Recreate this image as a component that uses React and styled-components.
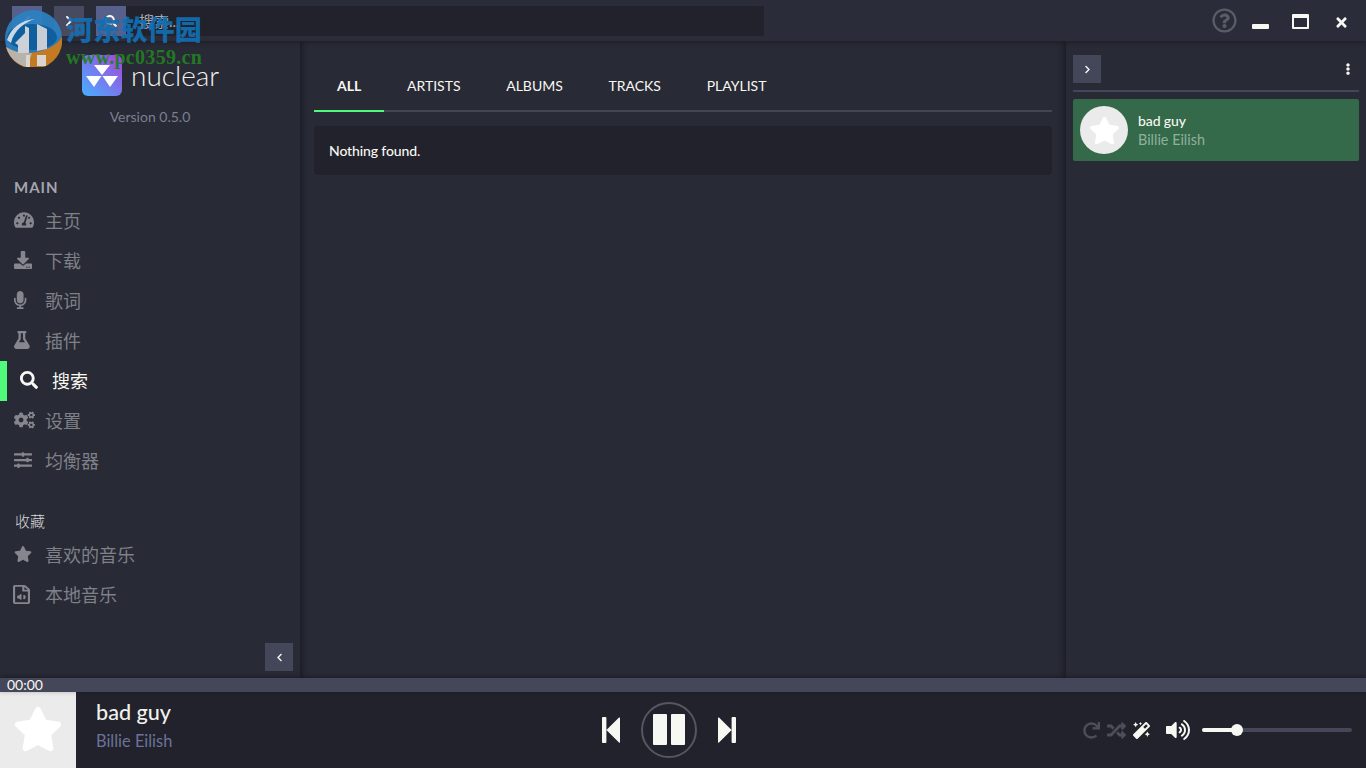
import React from "react";
import styled, { createGlobalStyle } from "styled-components";
import {
  FaTachometerAlt, FaDownload, FaMicrophone, FaFlask, FaSearch, FaCogs, FaSlidersH, FaStar,
  FaRegFileAudio, FaChevronLeft, FaChevronRight, FaRedo, FaRandom, FaMagic, FaVolumeUp,
  FaRegQuestionCircle, FaTimes, FaEllipsisV,
} from "react-icons/fa";

const Global = createGlobalStyle`
  html, body { margin: 0; padding: 0; height: 100%; overflow: hidden; background: #282a36; }
  #root { height: 100%; }
  * { box-sizing: border-box; }
`;

const Shell = styled.div`
  position: relative;
  height: 768px;
  display: flex;
  flex-direction: column;
  background: #282a36;
  color: #f8f8f2;
  font-family: Lato, "Noto Sans CJK SC", sans-serif;
  overflow: hidden;
`;

const TopBar = styled.header`
  height: 41px;
  flex: none;
  display: flex;
  align-items: center;
  padding: 0 12px;
  background: #2a2d39;
  box-shadow: 0 1px 5px rgba(0, 0, 0, 0.35);
  position: relative;
  z-index: 3;
`;

const NavButton = styled.button`
  width: 30px;
  height: 30px;
  margin-right: 12px;
  padding: 0;
  border: 0;
  display: flex;
  align-items: center;
  justify-content: center;
  font-size: 12px;
  color: #f8f8f2;
  background: ${(p) => (p.$lit ? "#56608a" : "#484a5f")};
`;

const SearchField = styled.div`
  width: 638px;
  height: 30px;
  margin-right: auto;
  margin-left: -12px;
  padding-left: 13px;
  display: flex;
  align-items: center;
  font-size: 15px;
  color: #a9abb0;
  background: #21222c;
`;

const WindowControls = styled.div`
  display: flex;
  align-items: center;
  color: #f8f8f2;
`;

const Help = styled.span`
  display: flex;
  font-size: 25px;
  color: #5a5c66;
  margin-right: 15px;
`;

const MinIcon = styled.span`
  width: 17px;
  height: 5px;
  margin-top: 11px;
  margin-right: 23px;
  border-radius: 1px;
  background: #f8f8f2;
`;

const MaxIcon = styled.span`
  width: 17px;
  height: 15px;
  margin-top: 1px;
  margin-right: 25px;
  border: 2px solid #f8f8f2;
  border-top-width: 4px;
  border-radius: 1px;
`;

const CloseIcon = styled.span`
  display: flex;
  font-size: 15px;
  margin-top: 3px;
  margin-right: 5px;
`;

const Middle = styled.div`
  flex: 1;
  min-height: 0;
  display: flex;
`;

const Sidebar = styled.aside`
  width: 300px;
  flex: none;
  display: flex;
  flex-direction: column;
  position: relative;
  z-index: 2;
  box-shadow: 2px 0 6px rgba(0, 0, 0, 0.4);
`;

const Brand = styled.div`
  height: 55px;
  padding-top: 14px;
  padding-left: 82px;
  display: flex;
  align-items: center;
  gap: 9px;
  flex: none;
`;

const BrandName = styled.span`
  font-family: Lato, sans-serif;
  font-weight: 300;
  font-size: 28px;
  line-height: 36px;
  margin-top: -1px;
  color: #f1f1ef;
`;

const Version = styled.div`
  margin-top: 12px;
  height: 18px;
  line-height: 18px;
  text-align: center;
  font-size: 14px;
  color: #7c7f92;
`;

const SectionTitle = styled.div`
  margin-top: ${(p) => p.$top}px;
  padding-left: ${(p) => (p.$cjk ? 15 : 14)}px;
  height: 20px;
  line-height: 20px;
  font-size: 15px;
  font-weight: ${(p) => (p.$cjk ? 300 : 700)};
  letter-spacing: ${(p) => (p.$cjk ? 0 : 1)}px;
  color: ${(p) => (p.$cjk ? "#d8d8da" : "#a4a5ac")};
`;

const NavList = styled.nav`
  margin-top: 4px;
  display: flex;
  flex-direction: column;
`;

const NavItem = styled.div`
  height: 40px;
  padding-bottom: 2px;
  display: flex;
  align-items: center;
  padding-left: ${(p) => (p.$active ? 13 : 14)}px;
  border-left: ${(p) => (p.$active ? "7px solid #50fa7b" : "0 solid transparent")};
  color: ${(p) => (p.$active ? "#f8f8f2" : "#7f8088")};
  font-size: 18px;
  font-weight: 400;
`;

const NavIcon = styled.span`
  width: ${(p) => (p.$active ? 32 : 31)}px;
  flex: none;
  display: flex;
  align-items: center;
  font-size: 18px;
  color: ${(p) => (p.$active ? "#f8f8f2" : "#85868e")};
  svg { width: ${(p) => p.$w ?? 18}px; }
`;

const FileIcon = styled(FaRegFileAudio)`
  && { width: 17px; height: 19px; margin-left: -1px; }
`;

const CollapseRow = styled.div`
  margin-top: auto;
  padding: 0 7px 7px 0;
  display: flex;
  justify-content: flex-end;
`;

const SquareButton = styled.button`
  width: 28px;
  height: 28px;
  padding: 0;
  border: 0;
  display: flex;
  align-items: center;
  justify-content: center;
  font-size: 9px;
  color: #f8f8f2;
  background: #44475a;
`;

const Content = styled.main`
  flex: 1;
  min-width: 0;
  padding: 15px 14px 0;
`;

const Tabs = styled.div`
  height: 56px;
  display: flex;
  border-bottom: 2px solid #44464f;
`;

const Tab = styled.div`
  height: 56px;
  padding: 4px 22.7px 0 23px;
  display: flex;
  align-items: center;
  font-size: 14px;
  font-weight: ${(p) => (p.$active ? 700 : 400)};
  color: #f8f8f2;
  border-bottom: 2px solid ${(p) => (p.$active ? "#50fa7b" : "transparent")};
`;

const Notice = styled.div`
  margin-top: 14px;
  height: 49px;
  padding-left: 15px;
  display: flex;
  align-items: center;
  font-size: 14px;
  font-weight: 500;
  letter-spacing: -0.12px;
  border-radius: 4px;
  color: #f8f8f2;
  background: #21222c;
`;

const Queue = styled.aside`
  width: 300px;
  flex: none;
  padding: 14px 7px 0;
  box-shadow: -2px 0 6px rgba(0, 0, 0, 0.4);
  position: relative;
`;

const QueueHeader = styled.div`
  height: 37px;
  padding-bottom: 7px;
  display: flex;
  align-items: center;
  justify-content: space-between;
  border-bottom: 2px solid #44475a;
`;

const QueueMenu = styled.span`
  display: flex;
  font-size: 12px;
  margin-right: 5px;
  color: #f8f8f2;
`;

const QueueItem = styled.div`
  margin-top: 7px;
  height: 62px;
  padding-left: 7px;
  display: flex;
  align-items: center;
  gap: 10px;
  border-radius: 2px;
  background: #34694a;
`;

const QueueCover = styled.div`
  width: 48px;
  height: 48px;
  border-radius: 50%;
  display: flex;
  align-items: center;
  justify-content: center;
  font-size: 31px;
  color: #fff;
  background: #ebebeb;
`;

const QueueText = styled.div`
  display: flex;
  flex-direction: column;
`;

const QueueTitle = styled.div`
  height: 19px;
  line-height: 19px;
  font-size: 14px;
  font-weight: 500;
  letter-spacing: -0.1px;
`;

const QueueArtist = styled.div`
  height: 19px;
  line-height: 19px;
  font-size: 14.4px;
  color: #8fb09c;
`;

const Seek = styled.div`
  height: 14px;
  flex: none;
  padding-left: 7px;
  line-height: 14px;
  font-size: 14px;
  color: #f8f8f2;
  background: #44475a;
  position: relative;
  z-index: 3;
  box-shadow: 0 -1px 5px rgba(0, 0, 0, 0.35);
`;

const Player = styled.footer`
  height: 76px;
  flex: none;
  display: grid;
  grid-template-columns: 1fr auto 1fr;
  align-items: center;
  background: #21222c;
`;

const Track = styled.div`
  display: flex;
  align-items: center;
  height: 76px;
`;

const Cover = styled.div`
  width: 76px;
  height: 76px;
  padding-bottom: 2px;
  display: flex;
  align-items: center;
  justify-content: center;
  font-size: 50px;
  color: #fff;
  background: #ebebeb;
`;

const TrackText = styled.div`
  margin-left: 20px;
  padding-bottom: 11px;
  display: flex;
  flex-direction: column;
`;

const TrackTitle = styled.div`
  height: 28px;
  line-height: 28px;
  font-size: 21.6px;
  font-weight: 500;
  color: #f1f1ec;
`;

const TrackArtist = styled.div`
  margin-top: 5px;
  height: 20px;
  line-height: 20px;
  font-size: 16.4px;
  color: #6c7399;
`;

const Transport = styled.div`
  display: flex;
  align-items: center;
  justify-content: center;
  gap: 21px;
  margin-left: -28px;
  margin-top: -1px;
`;

const PlayButton = styled.div`
  width: 56px;
  height: 56px;
  border-radius: 50%;
  border: 2px solid #55565e;
  display: flex;
  align-items: center;
  justify-content: center;
  gap: 4px;
`;

const PauseBar = styled.span`
  width: 14px;
  height: 31px;
  border-radius: 1px;
  background: #f8f8f2;
`;

const Controls = styled.div`
  display: flex;
  align-items: center;
  justify-content: flex-end;
  padding-right: 14px;
`;

const ModeIcon = styled.span`
  display: flex;
  font-size: ${(p) => p.$size ?? 17}px;
  margin-right: ${(p) => p.$gap}px;
  color: ${(p) => (p.$on ? "#f8f8f2" : "#4d4e58")};
`;

const VolumeTrack = styled.div`
  width: 150px;
  height: 4px;
  border-radius: 2px;
  position: relative;
  background: #44475a;
`;

const VolumeFill = styled.div`
  height: 4px;
  border-radius: 2px;
  background: #f8f8f2;
`;

const VolumeThumb = styled.span`
  position: absolute;
  top: -4px;
  width: 12px;
  height: 12px;
  margin-left: -6px;
  border-radius: 50%;
  background: #f8f8f2;
`;

const Watermark = styled.div`
  position: absolute;
  left: 5px;
  top: 10px;
  display: flex;
  z-index: 5;
  pointer-events: none;
`;

const WatermarkText = styled.div`
  margin-left: 4px;
  font-family: "Liberation Serif", "Noto Sans CJK SC", serif;
  font-weight: 700;
`;

const WatermarkTitle = styled.div`
  height: 32px;
  margin-top: 3px;
  line-height: 32px;
  font-family: "Noto Sans CJK SC", sans-serif;
  font-weight: 900;
  font-size: 27px;
  letter-spacing: 0.2px;
  color: rgba(18, 110, 178, 0.95);
`;

const WatermarkUrl = styled.div`
  height: 18px;
  margin-top: 3px;
  line-height: 18px;
  font-size: 20px;
  letter-spacing: 0.3px;
  color: rgba(34, 126, 34, 0.95);
`;

const WatermarkLogo = () => (
  <svg width="57" height="57" viewBox="0 0 57 57">
    <circle cx="28.5" cy="28.5" r="28.5" fill="#2c80c2" fillOpacity="0.93" />
    <path d="M57 27A28.5 28.5 0 0 1 1 37C10 43 22 44 32 42C42 40 52 35 57 27Z" fill="#c47a22" />
    <path d="M1 37C5 49 13 55 22 57L27 43C18 44 9 42 1 37Z" fill="#b8b3ad" />
    <ellipse cx="27" cy="27" rx="25" ry="13" fill="#0f5f9e" />
    <path d="M2 30C6 18 16 10 30 9C20 12 9 20 6 33Z" fill="#dfe6ec" opacity="0.9" />
    <path d="M10 33L20 23L20 16L24 18V43L13 43V35Z" fill="#cdd2d8" />
    <path d="M32 14L42 19V39L32 41Z" fill="#c9ced4" />
    <rect x="21" y="45" width="4" height="12" fill="#d9d5d0" />
    <rect x="32" y="45" width="9" height="11" fill="#d9d5d0" />
  </svg>
);

const BrandLogo = () => (
  <svg width="40" height="41" viewBox="0 0 40 41">
    <defs>
      <linearGradient id="brandGrad" x1="0" y1="1" x2="1" y2="0">
        <stop offset="0" stopColor="#45b0ff" />
        <stop offset="1" stopColor="#a844dc" />
      </linearGradient>
    </defs>
    <rect width="40" height="41" rx="6" fill="url(#brandGrad)" />
    <path d="M12 10H28L20 20ZM4 21H19.5L12 32ZM20.5 21H36L28 32Z" fill="#fff" />
  </svg>
);

const SkipBack = () => (
  <svg width="18" height="26" viewBox="0 0 18 26">
    <path d="M1 0H3.4Q4.4 0 4.4 1V25Q4.4 26 3.4 26H1Q0 26 0 25V1Q0 0 1 0ZM4.4 13L17 .6Q18 0 18 1V25Q18 26 17 25.4Z" fill="#f8f8f2" />
  </svg>
);

const SkipForward = () => (
  <svg width="18" height="26" viewBox="0 0 18 26">
    <path d="M17 0H14.6Q13.6 0 13.6 1V25Q13.6 26 14.6 26H17Q18 26 18 25V1Q18 0 17 0ZM13.6 13L1 .6Q0 0 0 1V25Q0 26 1 25.4Z" fill="#f8f8f2" />
  </svg>
);

const mainNav = [
  { Icon: FaTachometerAlt, label: "主页", w: 20 },
  { Icon: FaDownload, label: "下载" },
  { Icon: FaMicrophone, label: "歌词" },
  { Icon: FaFlask, label: "插件" },
  { Icon: FaSearch, label: "搜索", active: true },
  { Icon: FaCogs, label: "设置", w: 21 },
  { Icon: FaSlidersH, label: "均衡器" },
];

const favNav = [
  { Icon: FaStar, label: "喜欢的音乐" },
  { Icon: FileIcon, label: "本地音乐" },
];

const tabs = ["ALL", "ARTISTS", "ALBUMS", "TRACKS", "PLAYLIST"];

const renderNav = ({ Icon, label, active, w }) => (
  <NavItem key={label} $active={active}>
    <NavIcon $active={active} $w={w}>
      <Icon preserveAspectRatio={Icon === FileIcon ? "none" : "xMinYMid meet"} />
    </NavIcon>
    {label}
  </NavItem>
);

export default function App() {
  return (
    <Shell>
      <Global />
      <TopBar>
        <NavButton $lit><FaChevronLeft /></NavButton>
        <NavButton><FaChevronRight /></NavButton>
        <NavButton $lit><FaSearch /></NavButton>
        <SearchField>搜索...</SearchField>
        <WindowControls>
          <Help><FaRegQuestionCircle /></Help>
          <MinIcon />
          <MaxIcon />
          <CloseIcon><FaTimes /></CloseIcon>
        </WindowControls>
      </TopBar>
      <Middle>
        <Sidebar>
          <Brand>
            <BrandLogo />
            <BrandName>nuclear</BrandName>
          </Brand>
          <Version>Version 0.5.0</Version>
          <SectionTitle $top={51}>MAIN</SectionTitle>
          <NavList>{mainNav.map(renderNav)}</NavList>
          <SectionTitle $top={30} $cjk>收藏</SectionTitle>
          <NavList>{favNav.map(renderNav)}</NavList>
          <CollapseRow>
            <SquareButton><FaChevronLeft /></SquareButton>
          </CollapseRow>
        </Sidebar>
        <Content>
          <Tabs>
            {tabs.map((t, i) => (
              <Tab key={t} $active={i === 0}>{t}</Tab>
            ))}
          </Tabs>
          <Notice>Nothing found.</Notice>
        </Content>
        <Queue>
          <QueueHeader>
            <SquareButton><FaChevronRight /></SquareButton>
            <QueueMenu><FaEllipsisV /></QueueMenu>
          </QueueHeader>
          <QueueItem>
            <QueueCover><FaStar /></QueueCover>
            <QueueText>
              <QueueTitle>bad guy</QueueTitle>
              <QueueArtist>Billie Eilish</QueueArtist>
            </QueueText>
          </QueueItem>
        </Queue>
      </Middle>
      <Seek>00:00</Seek>
      <Player>
        <Track>
          <Cover><FaStar /></Cover>
          <TrackText>
            <TrackTitle>bad guy</TrackTitle>
            <TrackArtist>Billie Eilish</TrackArtist>
          </TrackText>
        </Track>
        <Transport>
          <SkipBack />
          <PlayButton><PauseBar /><PauseBar /></PlayButton>
          <SkipForward />
        </Transport>
        <Controls>
          <ModeIcon $gap={7}><FaRedo /></ModeIcon>
          <ModeIcon $gap={7} $size={19}><FaRandom /></ModeIcon>
          <ModeIcon $gap={16} $on><FaMagic /></ModeIcon>
          <ModeIcon $gap={12} $size={24} $on><FaVolumeUp /></ModeIcon>
          <VolumeTrack>
            <VolumeFill style={{ width: "35px" }} />
            <VolumeThumb style={{ left: "35px" }} />
          </VolumeTrack>
        </Controls>
      </Player>
      <Watermark>
        <WatermarkLogo />
        <WatermarkText>
          <WatermarkTitle>河东软件园</WatermarkTitle>
          <WatermarkUrl>www.pc0359.cn</WatermarkUrl>
        </WatermarkText>
      </Watermark>
    </Shell>
  );
}
